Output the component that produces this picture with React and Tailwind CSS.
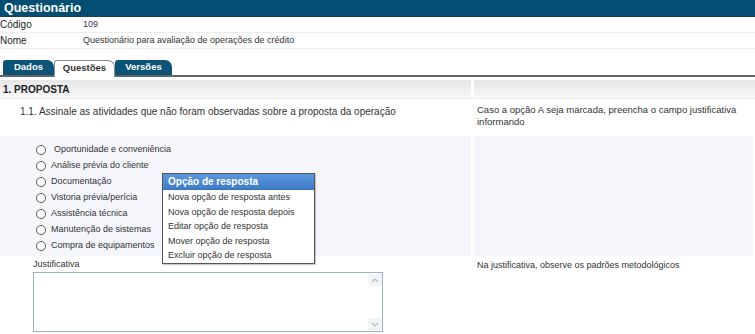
import React from 'react';

const options = [
  'Oportunidade e conveniência',
  'Análise prévia do cliente',
  'Documentação',
  'Vistoria prévia/perícia',
  'Assistência técnica',
  'Manutenção de sistemas',
  'Compra de equipamentos',
];

const menuItems = [
  'Nova opção de resposta antes',
  'Nova opção de resposta depois',
  'Editar opção de resposta',
  'Mover opção de resposta',
  'Excluir opção de resposta',
];

export default function App() {
  return (
    <div className="relative w-[755px] h-[334px] overflow-hidden bg-white text-[#333] font-['Liberation_Sans',Arial,sans-serif]">
      {/* Title bar */}
      <div className="h-[17px] bg-[#034e72] pl-[4px] text-[12.5px] font-bold leading-[17px] text-white border-b border-[#1d3f52]">
        Questionário
      </div>

      {/* Info rows */}
      <div className="flex h-[16px] items-center border-b border-[#ececec] text-[10px]">
        <span className="w-[83px] text-[#222]">Código</span>
        <span className="text-[9px] text-[#4a2f4f]">109</span>
      </div>
      <div className="flex h-[16px] items-center border-b border-[#ececec] text-[10px]">
        <span className="w-[83px] text-[#222]">Nome</span>
        <span className="text-[9px] text-[#333]">Questionário para avaliação de operações de crédito</span>
      </div>

      {/* Tabs */}
      <div className="mt-[12px] flex h-[16px] items-end border-b-2 border-[#5f6468] pl-[3px]">
        <div className="flex h-[15px] w-[51px] items-center justify-center rounded-tl-[3px] rounded-tr-[7px] bg-[#0d5378] text-[9.5px] font-bold text-white">
          Dados
        </div>
        <div className="-mb-[2px] flex h-[17px] w-[61px] items-center justify-center rounded-tl-[3px] rounded-tr-[7px] border border-b-0 border-[#8a9096] bg-white pb-[2px] text-[9.5px] font-bold text-[#333]">
          Questões
        </div>
        <div className="flex h-[15px] w-[57px] items-center justify-center rounded-tl-[3px] rounded-tr-[7px] bg-[#0d5378] text-[9.5px] font-bold text-white">
          Versões
        </div>
      </div>

      {/* Section header */}
      <div className="mt-[3px] flex h-[18px] gap-[3px]">
        <div className="flex w-[471px] items-center bg-gradient-to-b from-[#e6e6e6] to-[#f8f8f8] pl-[3px] text-[10px] font-bold text-[#222]">
          1. PROPOSTA
        </div>
        <div className="flex-1 bg-gradient-to-b from-[#e6e6e6] to-[#f8f8f8]" />
      </div>

      {/* Question row */}
      <div className="flex h-[30px] gap-[3px] border-t border-[#ececec]">
        <div className="w-[471px] pl-[20px] pt-[5px] text-[10px] text-[#333]">
          1.1. Assinale as atividades que não foram observadas sobre a proposta da operação
        </div>
        <div className="flex-1 pl-[3px] pt-[5px] text-[9.5px] leading-[12px] text-[#333]">
          Caso a opção A seja marcada, preencha o campo justificativa informando
        </div>
      </div>

      {/* Options */}
      <div className="mt-[8px] flex h-[120px] gap-[3px]">
        <div className="w-[471px] bg-[#f5f6fb] pl-[36px] pt-[6px]">
          {options.map((o, i) => (
            <div key={o} className="flex h-[16px] items-center">
              <span className="h-[10px] w-[10px] rounded-full border border-[#5c5c5c] bg-white" />
              <span className={`${i === 0 ? 'ml-[8px]' : 'ml-[5px]'} text-[9px] text-[#333]`}>{o}</span>
            </div>
          ))}
        </div>
        <div className="mr-[2px] flex-1 bg-[#f5f6fb]" />
      </div>

      {/* Justificativa */}
      <div className="flex gap-[3px]">
        <div className="w-[471px] pl-[33px] pt-[3px]">
          <div className="text-[9px] leading-[11px] text-[#333]">Justificativa</div>
          <div className="mt-[2px] flex h-[60px] w-[350px] border border-[#9db0c6] bg-white">
            <div className="flex-1" />
            <div className="flex w-[14px] flex-col justify-between py-[1px]">
              <div className="flex h-[12px] items-center justify-center bg-[#f2f3f5]">
                <svg width="8" height="5" viewBox="0 0 8 5"><path d="M1 4 L4 1 L7 4" fill="none" stroke="#b7bcc4" strokeWidth="1.2" /></svg>
              </div>
              <div className="flex h-[12px] items-center justify-center bg-[#f2f3f5]">
                <svg width="8" height="5" viewBox="0 0 8 5"><path d="M1 1 L4 4 L7 1" fill="none" stroke="#b7bcc4" strokeWidth="1.2" /></svg>
              </div>
            </div>
          </div>
        </div>
        <div className="flex-1 pl-[3px] pt-[4px] text-[9px] leading-[11px] text-[#333]">
          Na justificativa, observe os padrões metodológicos
        </div>
      </div>

      {/* Context menu */}
      <div className="absolute left-[162px] top-[173px] w-[153px] border border-[#555] bg-white shadow-[1px_1px_1px_rgba(0,0,0,0.2)]">
        <div className="h-[16px] border-b border-[#3a6fb0] bg-gradient-to-b from-[#5d97dc] to-[#3f7cc8] pl-[5px] text-[10px] font-bold leading-[16px] text-white">
          Opção de resposta
        </div>
        {menuItems.map((m) => (
          <div key={m} className="h-[14.6px] pl-[5px] text-[9px] leading-[14.6px] text-[#333]">
            {m}
          </div>
        ))}
      </div>
    </div>
  );
}
